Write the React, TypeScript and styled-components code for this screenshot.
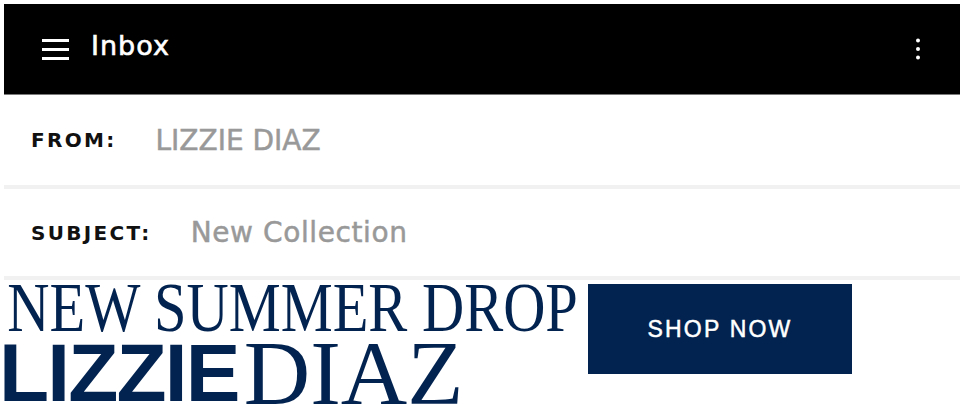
import React from "react";
import styled, { createGlobalStyle } from "styled-components";

const Global = createGlobalStyle`
  html, body { margin: 0; padding: 0; background: #ffffff; }
  body { padding: 4px; overflow: hidden; }
  * { box-sizing: border-box; }
`;

const Page = styled.div`
  width: 956px;
  display: flex;
  flex-direction: column;
  font-family: "DejaVu Sans", "Liberation Sans", sans-serif;
`;

const TopBar = styled.header`
  height: 91px;
  background: #000;
  border-bottom: 1px solid #7a7a7a;
  display: flex;
  align-items: center;
  padding: 0 40px 0 38px;
  color: #fff;
`;

const Title = styled.h1`
  margin: 0 0 7px 22px;
  font-size: 27px;
  font-weight: 500;
  letter-spacing: 1px;
  line-height: 1;
  flex: 1;
  -webkit-text-stroke: 0.6px #fff;
`;

const IconBox = styled.div`
  display: flex;
  align-items: center;
`;

const Row = styled.div<{ $h: number }>`
  height: ${(p) => p.$h}px;
  border-bottom: 4px solid #f1f1f1;
  display: flex;
  align-items: center;
  padding-left: 27px;
  gap: 39px;
`;

const Label = styled.span`
  font-size: 20px;
  font-weight: 700;
  letter-spacing: 2.3px;
  color: #111;
`;

const Value = styled.span<{ $spacing?: number }>`
  font-size: 28px;
  color: #999;
  letter-spacing: ${(p) => p.$spacing ?? 0}px;
  -webkit-text-stroke: 0.5px #999;
`;

const Banner = styled.section`
  display: flex;
  align-items: flex-start;
  height: 129px;
  color: #022350;
`;

const Headline = styled.div`
  width: 584px;
  flex: none;
`;

const SerifLine = styled.div`
  font-family: "Liberation Serif", "Times New Roman", serif;
  font-size: 70px;
  line-height: 56px;
  height: 56px;
  white-space: nowrap;
  padding-left: 4px;
  transform: scaleX(0.835);
  transform-origin: left;
`;

const NameLine = styled.div`
  margin-top: 7px;
  display: flex;
  align-items: flex-start;
  white-space: nowrap;
`;

const SansPart = styled.span`
  font-family: "Liberation Sans", Arial, sans-serif;
  font-weight: 700;
  font-size: 82px;
  line-height: 60px;
  letter-spacing: -1.8px;
  margin-left: -5px;
`;

const SerifPart = styled.span`
  font-family: "Liberation Serif", "Times New Roman", serif;
  font-size: 92px;
  line-height: 60px;
  margin-left: 5px;
`;

const ShopButton = styled.button`
  margin-top: 4px;
  width: 264px;
  height: 90px;
  background: #022350;
  color: #fff;
  border: none;
  font-family: "Liberation Sans", Arial, sans-serif;
  font-size: 23px;
  letter-spacing: 2.2px;
  padding: 0;
  -webkit-text-stroke: 0.5px #fff;
`;

export default function App() {
  return (
    <>
      <Global />
      <Page>
        <TopBar>
          <IconBox>
            <svg width="27" height="23" viewBox="0 0 27 23">
              <rect x="0" y="1" width="27" height="3" fill="#fff" />
              <rect x="0" y="10" width="27" height="3" fill="#fff" />
              <rect x="0" y="19" width="27" height="3" fill="#fff" />
            </svg>
          </IconBox>
          <Title>Inbox</Title>
          <IconBox>
            <svg width="4" height="22" viewBox="0 0 4 22">
              <circle cx="2" cy="2.5" r="2" fill="#fff" />
              <circle cx="2" cy="11" r="2" fill="#fff" />
              <circle cx="2" cy="19.5" r="2" fill="#fff" />
            </svg>
          </IconBox>
        </TopBar>
        <Row $h={94}>
          <Label>FROM:</Label>
          <Value>LIZZIE DIAZ</Value>
        </Row>
        <Row $h={91}>
          <Label>SUBJECT:</Label>
          <Value $spacing={0.6}>New Collection</Value>
        </Row>
        <Banner>
          <Headline>
            <SerifLine>NEW SUMMER DROP</SerifLine>
            <NameLine>
              <SansPart>LIZZIE</SansPart>
              <SerifPart>DIAZ</SerifPart>
            </NameLine>
          </Headline>
          <ShopButton>SHOP NOW</ShopButton>
        </Banner>
      </Page>
    </>
  );
}
